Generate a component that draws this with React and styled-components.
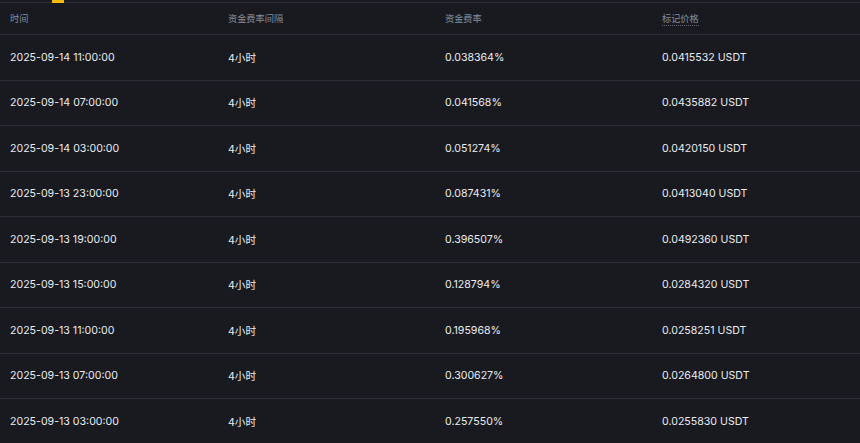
import React from 'react';
import styled, { createGlobalStyle } from 'styled-components';

const GlobalStyle = createGlobalStyle`
  html, body {
    margin: 0;
    padding: 0;
    background: #181a20;
  }
  body {
    font-family: Inter, "Noto Sans", "Noto Sans CJK SC", sans-serif;
    -webkit-font-smoothing: antialiased;
  }
`;

const Wrapper = styled.div`
  width: 860px;
  height: 443px;
  overflow: hidden;
  background: #181a20;
`;

const TabBar = styled.div`
  height: 2px;
  border-bottom: 1px solid #2b2f36;
  padding-left: 52px;
`;

const TabIndicator = styled.div`
  width: 12px;
  height: 3px;
  background: #f0b90b;
`;

const Row = styled.div`
  display: grid;
  grid-template-columns: 218px 217px 217px 1fr;
  align-items: center;
  padding-left: 10px;
  height: ${(p) => (p.$header ? '30px' : '44.5px')};
  padding-bottom: ${(p) => (p.$header ? '1px' : '0')};
  border-bottom: 1px solid #2b2f36;
  color: ${(p) => (p.$header ? '#848e9c' : '#eaecef')};
  font-size: ${(p) => (p.$header ? '9.2px' : '10.6px')};
`;

const Dotted = styled.span`
  border-bottom: 1px dotted #5e6673;
  padding-bottom: 1px;
`;

const rows = [
  ['2025-09-14 11:00:00', '0.038364%', '0.0415532'],
  ['2025-09-14 07:00:00', '0.041568%', '0.0435882'],
  ['2025-09-14 03:00:00', '0.051274%', '0.0420150'],
  ['2025-09-13 23:00:00', '0.087431%', '0.0413040'],
  ['2025-09-13 19:00:00', '0.396507%', '0.0492360'],
  ['2025-09-13 15:00:00', '0.128794%', '0.0284320'],
  ['2025-09-13 11:00:00', '0.195968%', '0.0258251'],
  ['2025-09-13 07:00:00', '0.300627%', '0.0264800'],
  ['2025-09-13 03:00:00', '0.257550%', '0.0255830'],
];

export default function App() {
  return (
    <Wrapper>
      <GlobalStyle />
      <TabBar>
        <TabIndicator />
      </TabBar>
      <Row $header>
        <span>时间</span>
        <span>资金费率间隔</span>
        <span>资金费率</span>
        <span><Dotted>标记价格</Dotted></span>
      </Row>
      {rows.map(([time, rate, price]) => (
        <Row key={time}>
          <span>{time}</span>
          <span>4小时</span>
          <span>{rate}</span>
          <span>{price} USDT</span>
        </Row>
      ))}
    </Wrapper>
  );
}
